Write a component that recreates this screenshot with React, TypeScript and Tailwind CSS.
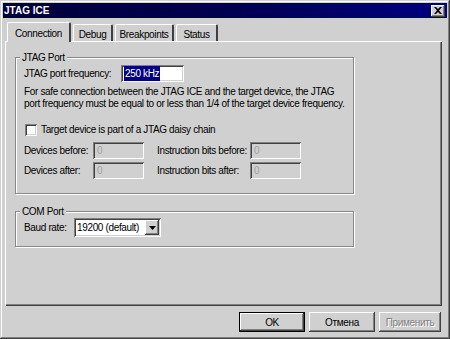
import React from "react";

const raised =
  "shadow-[inset_-1px_-1px_0_#404040,inset_1px_1px_0_#ffffff,inset_-2px_-2px_0_#808080]";
const sunken =
  "shadow-[inset_1px_1px_0_#808080,inset_-1px_-1px_0_#ffffff,inset_2px_2px_0_#404040,inset_-2px_-2px_0_#d0d0d0]";

function Field({ w, value, disabled }: { w: string; value: string; disabled?: boolean }) {
  return (
    <div
      className={`${w} h-[17px] ${sunken} ${disabled ? "bg-[#d0d0d0] text-[#a0a0a0]" : "bg-white text-black"} flex items-center pl-[4px]`}
    >
      {value}
    </div>
  );
}

function Group({ title, children, className }: { title: string; children: React.ReactNode; className?: string }) {
  return (
    <fieldset
      className={`border border-[#888888] shadow-[1px_1px_0_#ffffff,inset_1px_1px_0_#ffffff] ${className ?? ""}`}
    >
      <legend className="-ml-[4px] px-[2px] bg-[#d0d0d0] leading-[13px]">{title}</legend>
      {children}
    </fieldset>
  );
}

function Tab({ label, w, selected }: { label: string; w: string; selected?: boolean }) {
  return (
    <div
      className={`${w} ${selected ? "h-[20px] -mb-[1px] pt-[3px]" : "h-[17px] ml-[2px] pt-[2px]"} flex justify-center items-start bg-[#d0d0d0] border-t border-l border-white border-r-2 border-r-[#404040] rounded-t-[2px]`}
    >
      {label}
    </div>
  );
}

export default function App() {
  return (
    <div
      className="w-[450px] h-[339px] bg-[#d0d0d0] text-black text-[10px] tracking-[-0.35px] flex flex-col p-[3px] shadow-[inset_-1px_-1px_0_#404040,inset_1px_1px_0_#d0d0d0,inset_-2px_-2px_0_#808080,inset_2px_2px_0_#ffffff]"
      style={{ fontFamily: '"Liberation Sans", Arial, sans-serif' }}
    >
      {/* title bar */}
      <div className="h-[15px] flex items-center justify-between bg-gradient-to-r from-[#00003a] via-[#000050] to-[#000080] pl-[1px] pr-[2px]">
        <span className="text-white font-bold text-[10px] tracking-[0px]">JTAG ICE</span>
        <div className={`w-[14px] h-[12px] bg-[#d0d0d0] ${raised} flex items-center justify-center`}>
          <svg width="8" height="7" viewBox="0 0 8 7">
            <path d="M0 0h2l2 2 2-2h2L5 3.5 8 7H6L4 5 2 7H0l3-3.5z" fill="#000" />
          </svg>
        </div>
      </div>

      {/* tabs */}
      <div className="mt-[4px] h-[19px] flex items-end pl-[4px] relative z-10">
        <Tab label="Connection" w="w-[64px]" selected />
        <Tab label="Debug" w="w-[40px]" />
        <Tab label="Breakpoints" w="w-[59px]" />
        <Tab label="Status" w="w-[42px]" />
      </div>

      {/* panel */}
      <div className="ml-[2px] mr-[5px] h-[265px] shadow-[inset_1px_1px_0_#ffffff,inset_-1px_-1px_0_#404040,inset_-2px_-2px_0_#808080] pt-[10px] pl-[10px] flex flex-col">
        <Group title="JTAG Port" className="w-[339px] h-[143px] pl-[8px]">
          <div className="flex items-center mt-[1px]">
            <span className="w-[97px]">JTAG port frequency:</span>
            <div className={`w-[63px] h-[17px] bg-white ${sunken} flex items-center pl-[3px]`}>
              <span className="bg-[#000080] text-white px-[1px]">250 kHz</span>
            </div>
          </div>
          <div className="mt-[4px] leading-[12px]">
            For safe connection between the JTAG ICE and the target device, the JTAG
            <br />
            port frequency must be equal to or less than 1/4 of the target device frequency.
          </div>
          <div className="mt-[12px] flex items-center">
            <div className={`w-[12px] h-[12px] bg-white ${sunken} ml-[1px]`} />
            <span className="ml-[4px]">Target device is part of a JTAG daisy chain</span>
          </div>
          <div className="mt-[5px] flex items-center">
            <span className="w-[69px]">Devices before:</span>
            <Field w="w-[51px]" value="0" disabled />
            <span className="ml-[13px] w-[93px]">Instruction bits before:</span>
            <Field w="w-[51px]" value="0" disabled />
          </div>
          <div className="mt-[3px] flex items-center">
            <span className="w-[69px]">Devices after:</span>
            <Field w="w-[51px]" value="0" disabled />
            <span className="ml-[13px] w-[93px]">Instruction bits after:</span>
            <Field w="w-[51px]" value="0" disabled />
          </div>
        </Group>

        <Group title="COM Port" className="w-[339px] h-[42px] mt-[11px] pl-[8px]">
          <div className="flex items-center">
            <span className="w-[50px]">Baud rate:</span>
            <div className={`w-[87px] h-[19px] bg-white ${sunken} flex items-center justify-between pl-[3px] pr-[2px]`}>
              <span>19200 (default)</span>
              <div className={`w-[14px] h-[15px] bg-[#d0d0d0] ${raised} flex items-center justify-center`}>
                <svg width="7" height="4" viewBox="0 0 7 4">
                  <path d="M0 0h7L3.5 4z" fill="#000" />
                </svg>
              </div>
            </div>
          </div>
        </Group>
      </div>

      {/* buttons */}
      <div className="mt-[6px] flex justify-end gap-[4px] pr-[6px]">
        <div className="w-[66px] h-[20px] border border-black flex items-center justify-center bg-[#d0d0d0] shadow-[inset_-1px_-1px_0_#404040,inset_1px_1px_0_#ffffff,inset_-2px_-2px_0_#808080]">
          OK
        </div>
        <div className={`w-[66px] h-[20px] flex items-center justify-center ${raised}`}>Отмена</div>
        <div
          className={`w-[62px] h-[20px] flex items-center justify-center ${raised} text-[#808080] [text-shadow:1px_1px_0_#ffffff]`}
        >
          Применить
        </div>
      </div>
    </div>
  );
}
